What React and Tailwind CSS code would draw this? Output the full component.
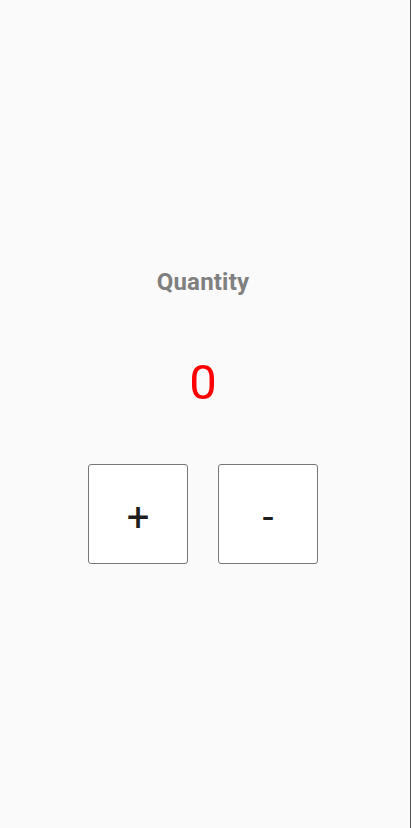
import React, { useState } from "react";

const App = () => {
  const [quantity, setQuantity] = useState(0);

  return (
    <div className="min-h-screen w-[411px] bg-[#fafafa] border-r border-[#555555] font-['Roboto',sans-serif]">
      <div className="flex flex-col items-center pt-[268px] pr-[4px]">
        <p className="text-[24px] leading-[28px] font-bold text-[#808080] tracking-[0.2px]">Quantity</p>
        <p className="mt-[58px] text-[49px] leading-[57px] text-[#ff0000]">{quantity}</p>
        <div className="flex gap-[30px] mt-[53px]">
          <button
            className="w-[100px] h-[100px] bg-white border border-[#777777] rounded-[3px] text-[40px] text-[#1e1e1e] flex items-center justify-center pt-[7px]"
            onClick={() => setQuantity(quantity + 1)}
          >
            +
          </button>
          <button
            className="w-[100px] h-[100px] bg-white border border-[#777777] rounded-[3px] text-[40px] text-[#1e1e1e] flex items-center justify-center pt-[7px]"
            onClick={() => setQuantity(quantity - 1)}
          >
            -
          </button>
        </div>
      </div>
    </div>
  );
};

export default App;
